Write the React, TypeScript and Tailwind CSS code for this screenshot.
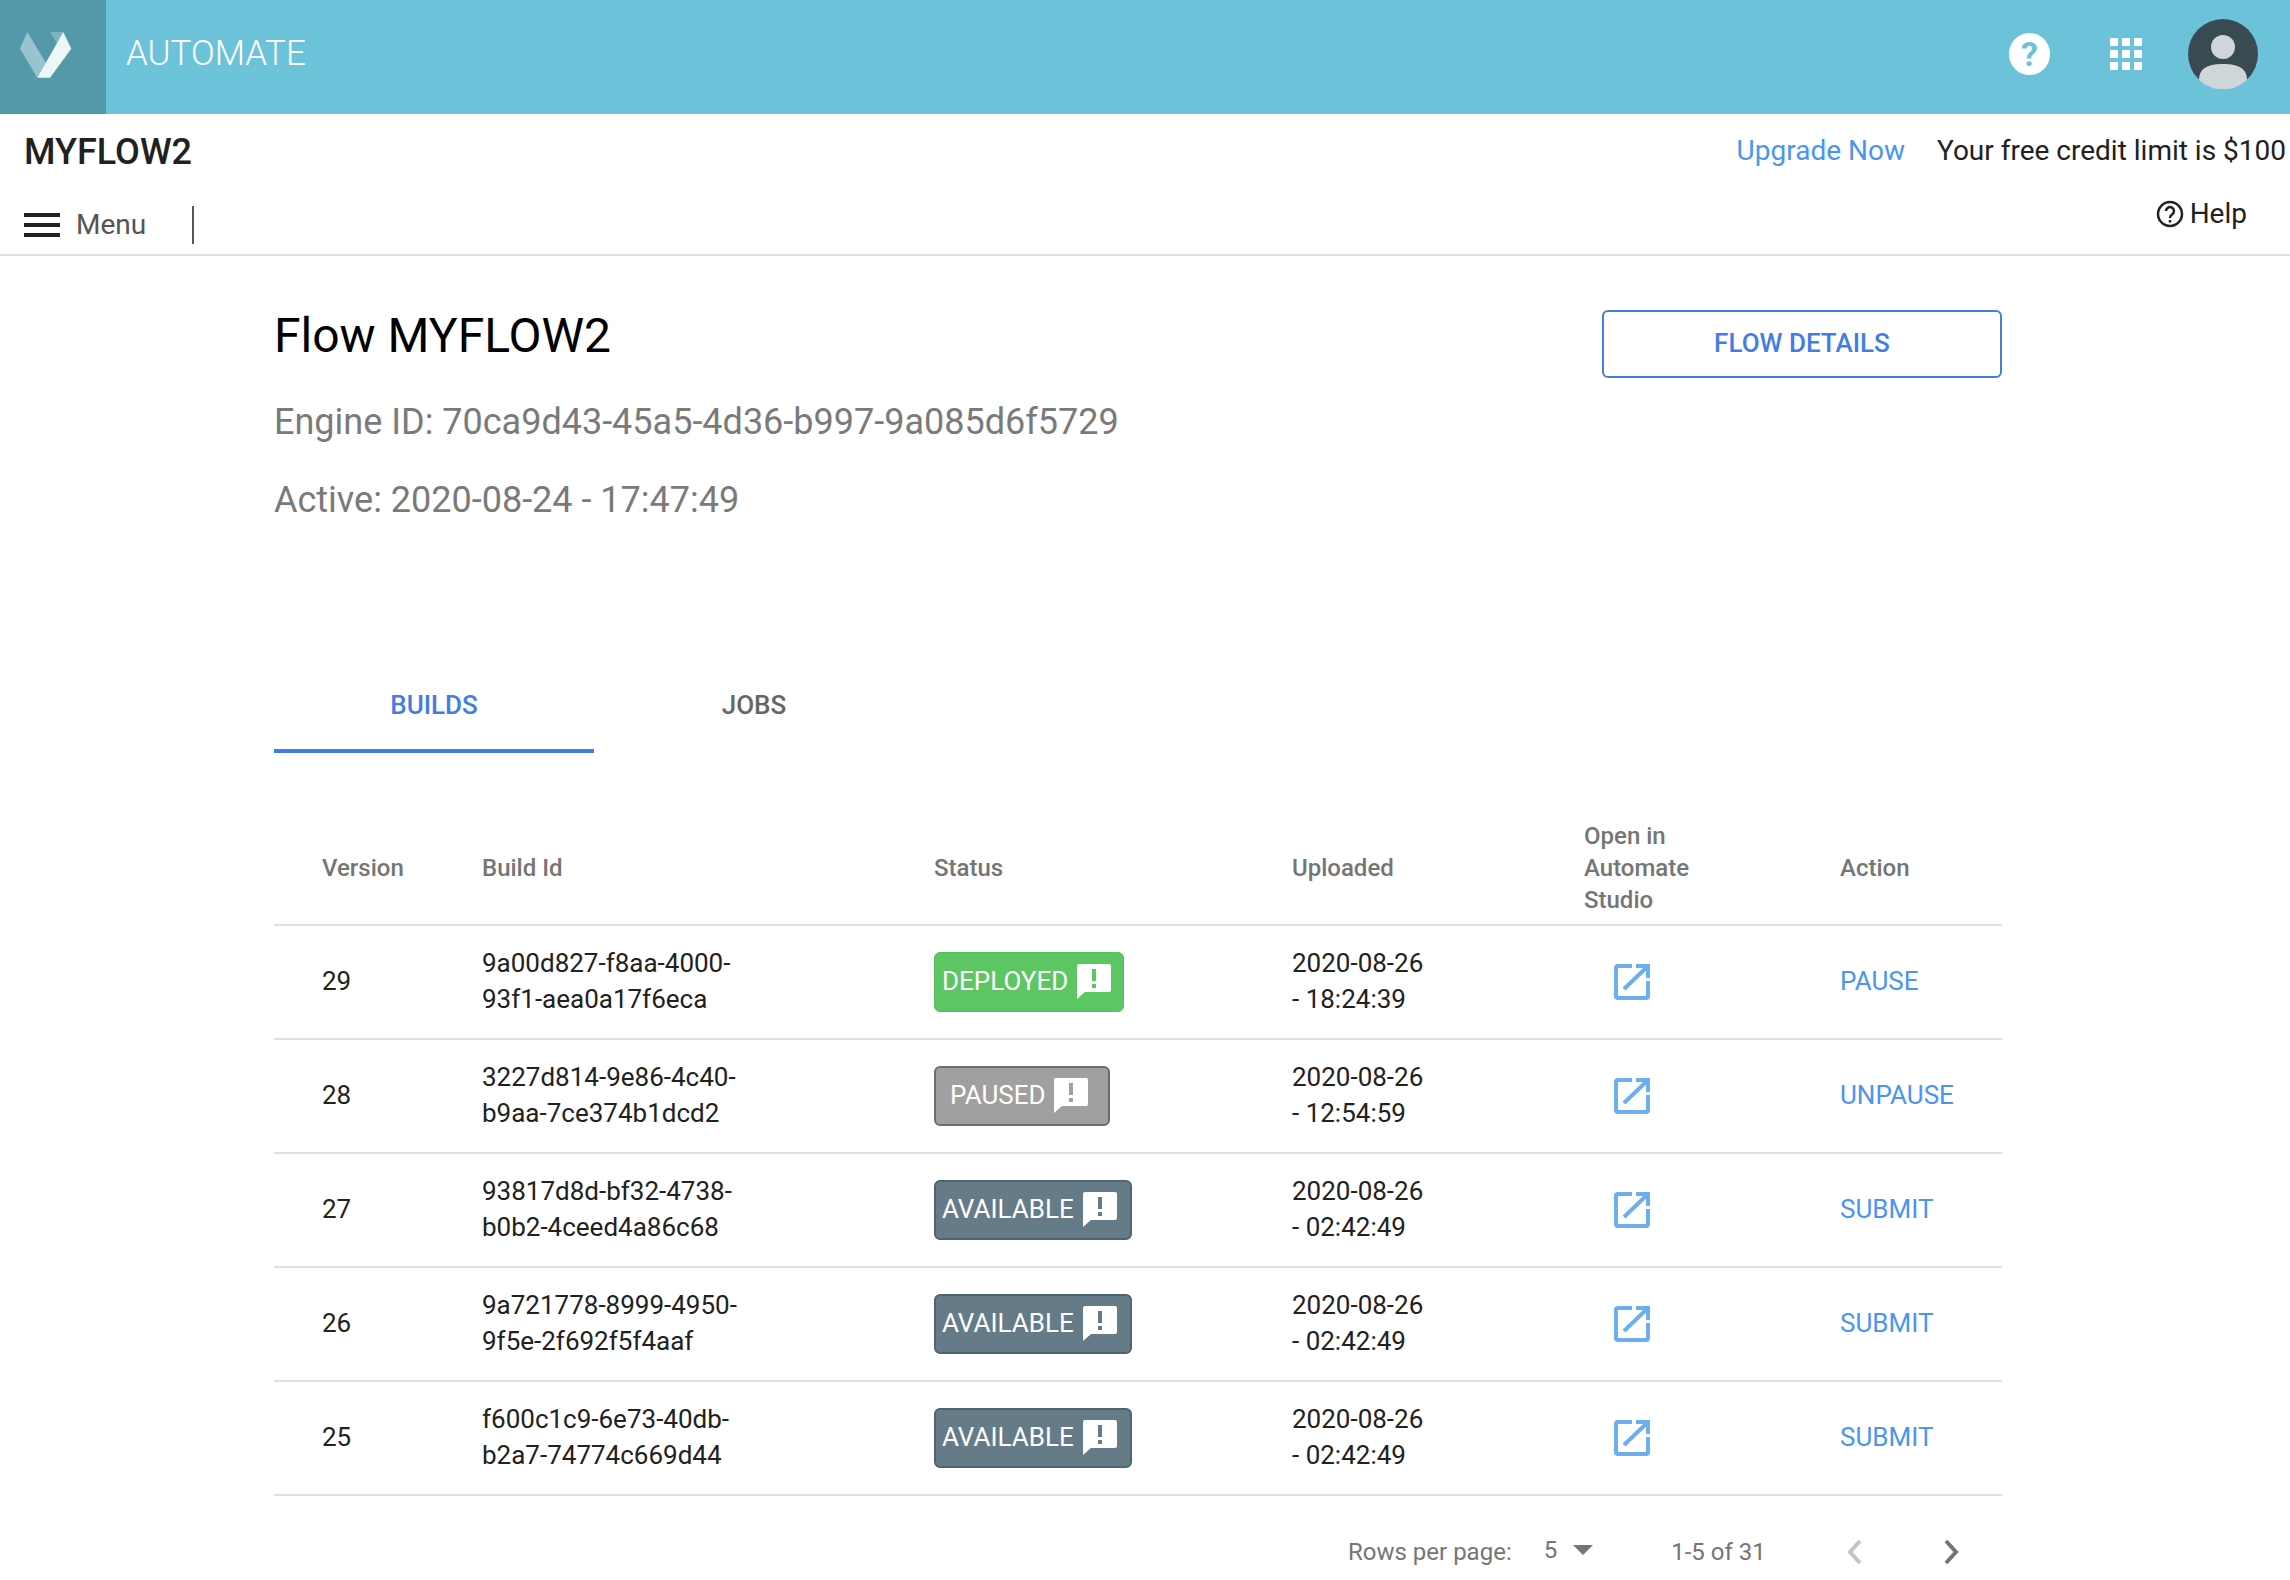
import React from "react";

const rows = [
  { v: "29", id: ["9a00d827-f8aa-4000-", "93f1-aea0a17f6eca"], s: "DEPLOYED", t: "18:24:39", a: "PAUSE" },
  { v: "28", id: ["3227d814-9e86-4c40-", "b9aa-7ce374b1dcd2"], s: "PAUSED", t: "12:54:59", a: "UNPAUSE" },
  { v: "27", id: ["93817d8d-bf32-4738-", "b0b2-4ceed4a86c68"], s: "AVAILABLE", t: "02:42:49", a: "SUBMIT" },
  { v: "26", id: ["9a721778-8999-4950-", "9f5e-2f692f5f4aaf"], s: "AVAILABLE", t: "02:42:49", a: "SUBMIT" },
  { v: "25", id: ["f600c1c9-6e73-40db-", "b2a7-74774c669d44"], s: "AVAILABLE", t: "02:42:49", a: "SUBMIT" },
];

function Bubble({ fill }: { fill: string }) {
  return (
    <svg width="36" height="36" viewBox="0 0 36 36" className="-mt-[1px] shrink-0">
      <path d="M2 3a2 2 0 0 1 2-2h30a2 2 0 0 1 2 2v24a2 2 0 0 1-2 2H10l-8 7z" fill="#fff" />
      <rect x="17" y="6" width="4" height="12" fill={fill} />
      <rect x="17" y="21" width="4" height="4" fill={fill} />
    </svg>
  );
}

function Status({ s }: { s: string }) {
  if (s === "DEPLOYED")
    return (
      <div className="flex h-[60px] w-[190px] items-center gap-[7px] rounded-[6px] border border-[#5abb5f] bg-[#5cc663] pb-[2px] pl-[7px] text-[26px] text-white">
        DEPLOYED <Bubble fill="#5cc663" />
      </div>
    );
  if (s === "PAUSED")
    return (
      <div className="flex h-[60px] w-[176px] items-center gap-[6px] rounded-[6px] border-2 border-[#6d6d6d] bg-[#a0a0a0] pb-[2px] pl-[14px] text-[26px] text-white">
        PAUSED <Bubble fill="#a0a0a0" />
      </div>
    );
  return (
    <div className="flex h-[60px] w-[198px] items-center gap-[7px] rounded-[6px] border-2 border-[#4f6370] bg-[#657b88] pb-[2px] pl-[6px] text-[26px] text-white">
      AVAILABLE <Bubble fill="#657b88" />
    </div>
  );
}

function OpenIcon() {
  return (
    <svg width="36" height="36" viewBox="0 0 36 36" fill="none" stroke="#6daeee" strokeWidth="4">
      <path d="M18 2H4a2 2 0 0 0-2 2v28a2 2 0 0 0 2 2h28a2 2 0 0 0 2-2V17" />
      <path d="M10 25 33 3" />
      <path d="M22 2h12v12" />
    </svg>
  );
}

export default function App() {
  return (
    <div className="h-[1580px] w-[2290px] overflow-hidden bg-white font-['Roboto',sans-serif] text-[#212121]">
      <header className="flex h-[114px] items-center bg-[#6cc3d9]">
        <div className="flex h-full w-[106px] items-center bg-[#5499a9] pb-[5px] pl-[20px]">
          <svg width="52" height="46" viewBox="0 0 52 46">
            <path d="M7.300 0 0 16.700 17.300 45.700 26 31z" fill="#98c4d0" />
            <path d="M30 0h13.300l-6 12.300z" fill="#7fb3c1" />
            <path d="M43.300 0 51.300 16.700 30 45.700H17.300z" fill="#eef6f8" />
          </svg>
        </div>
        <div className="ml-[20px] -mt-[5px] text-[35px] font-light text-white">AUTOMATE</div>
        <div className="ml-auto -mt-[6px] flex items-center">
          <div className="flex h-[42px] w-[41px] items-center justify-center rounded-full bg-white text-[34px] font-bold text-[#6cc3d9]">?</div>
          <div className="ml-[60px] grid w-[32px] grid-cols-3 gap-[4px]">
            {Array.from({ length: 9 }).map((_, i) => (
              <div key={i} className="h-[8px] bg-white" />
            ))}
          </div>
          <svg className="ml-[46px] mr-[32px]" width="70" height="70" viewBox="0 0 70 70">
            <circle cx="35" cy="35" r="35" fill="#3a4a52" />
            <ellipse cx="35" cy="28" rx="12" ry="12" fill="#ced6d9" />
            <path d="M11 61c0-13 11-16 24-16s24 3 24 16a35 35 0 0 1-48 0z" fill="#ced6d9" />
          </svg>
        </div>
      </header>

      <div className="flex h-[142px] border-b-2 border-[#e0e0e0]">
        <div className="flex w-[1100px] flex-col">
          <div className="pl-[24px] pt-[17px] text-[36px] leading-[42px] font-medium">MYFLOW2</div>
          <div className="mt-[31px] flex items-center pl-[24px]">
            <svg width="36" height="24" viewBox="0 0 36 24" fill="#212121">
              <rect width="36" height="4" y="0" />
              <rect width="36" height="4" y="10" />
              <rect width="36" height="4" y="20" />
            </svg>
            <span className="ml-[16px] text-[28px] text-[#555]">Menu</span>
            <span className="ml-[46px] h-[38px] w-[2px] bg-[#555]" />
          </div>
        </div>
        <div className="flex flex-1 flex-col items-end">
          <div className="flex pt-[17px] text-[28px] leading-[40px]">
            <span className="text-[#4a95ef]">Upgrade Now</span>
            <span className="ml-[32px] mr-[4px]">Your free credit limit is $100</span>
          </div>
          <div className="mt-[22px] mr-[43px] flex items-center text-[28px]">
            <svg width="28" height="28" viewBox="0 0 28 28" fill="none" stroke="#212121" strokeWidth="2.5" className="mr-[6px]">
              <circle cx="14" cy="14" r="12" />
              <path d="M10 11a4 4 0 1 1 6 3.500c-1.500 1-2 1.500-2 3.500" />
              <path d="M14 20v2.500" />
            </svg>
            Help
          </div>
        </div>
      </div>

      <main className="ml-[274px] w-[1728px] pt-[50px]">
        <div className="flex items-start justify-between">
          <div>
            <h1 className="text-[48px] leading-[60px] text-black">Flow MYFLOW2</h1>
            <p className="mt-[34px] text-[36px] leading-[44px] text-[#7a7a7a]">Engine ID: 70ca9d43-45a5-4d36-b997-9a085d6f5729</p>
            <p className="mt-[34px] text-[36px] leading-[44px] text-[#7a7a7a]">Active: 2020-08-24 - 17:47:49</p>
          </div>
          <button className="mt-[4px] h-[68px] w-[400px] rounded-[6px] border-2 border-[#427ce4] pb-[1px] text-[26px] font-medium text-[#427ce4]">FLOW DETAILS</button>
        </div>

        <div className="mt-[135px] flex h-[96px]">
          <div className="flex w-[320px] items-center justify-center border-b-[4px] border-[#427ce4] pt-[5px] text-[26px] font-medium text-[#427ce4]">BUILDS</div>
          <div className="flex w-[320px] items-center justify-center pt-[1px] text-[26px] font-medium text-[#666]">JOBS</div>
        </div>

        <div className="mt-[59px]">
          <div className="grid h-[114px] grid-cols-[208px_452px_358px_292px_256px_1fr] items-center border-b-2 border-[#e0e0e0] text-[24px] leading-[32px] font-medium text-[#757575]">
            <div className="pl-[48px]">Version</div>
            <div>Build Id</div>
            <div>Status</div>
            <div>Uploaded</div>
            <div>Open in<br />Automate<br />Studio</div>
            <div>Action</div>
          </div>
          {rows.map((r, i) => (
            <div key={i} className="grid h-[114px] grid-cols-[208px_452px_358px_292px_256px_1fr] items-center border-b-2 border-[#e0e0e0] text-[26px] leading-[36px]">
              <div className="pb-[2px] pl-[48px]">{r.v}</div>
              <div className="pb-[2px]">{r.id[0]}<br />{r.id[1]}</div>
              <div><Status s={r.s} /></div>
              <div className="pb-[2px]">2020-08-26<br />- {r.t}</div>
              <div className="pl-[30px]"><OpenIcon /></div>
              <div className="pb-[2px] text-[#4a95ef]">{r.a}</div>
            </div>
          ))}
          <div className="mt-[40px] flex items-center text-[24px] leading-[32px] text-[#757575]">
            <span className="ml-[1074px]">Rows per page:</span>
            <span className="ml-[32px] -mt-[4px]">5</span>
            <span className="ml-[16px] -mt-[4px] h-0 w-0 border-x-[10px] border-t-[10px] border-x-transparent border-t-[#757575]" />
            <span className="ml-[78px]">1-5 of 31</span>
            <svg className="ml-[79px]" width="20" height="28" viewBox="0 0 20 28" fill="none" stroke="#c4c4c4" strokeWidth="4"><path d="M15 3 5 14l10 11" /></svg>
            <svg className="ml-[76px]" width="20" height="28" viewBox="0 0 20 28" fill="none" stroke="#757575" strokeWidth="4"><path d="M5 3l10 11L5 25" /></svg>
          </div>
        </div>
      </main>
    </div>
  );
}
